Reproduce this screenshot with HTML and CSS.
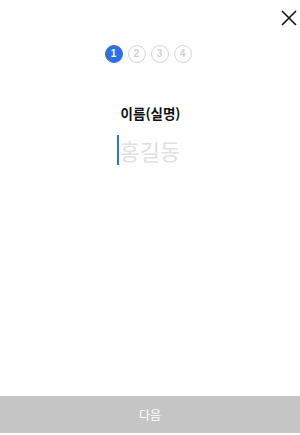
FILE: index.html
```html
<!DOCTYPE html>
<html lang="ko">
<head>
  <meta charset="UTF-8">
  <title>이름 입력</title>
  <meta name="viewport" content="width=device-width, initial-scale=1.0">
  <link rel="stylesheet" href="styles.css">
</head>
<body>
  <div class="page">
    <header class="top">
      <button class="close" type="button" aria-label="닫기">
        <svg width="16" height="16" viewBox="0 0 16 16">
          <path d="M1 1 L15 15 M15 1 L1 15" stroke="#111" stroke-width="1.6" fill="none"/>
        </svg>
      </button>
    </header>

    <!-- 단계 표시 -->
    <ol class="steps">
      <li class="step active">1</li>
      <li class="step">2</li>
      <li class="step">3</li>
      <li class="step">4</li>
    </ol>

    <form class="form" action="#">
      <label class="label" for="name">이름(실명)</label>
      <div class="field">
        <span class="caret"></span>
        <input id="name" class="input" type="text" placeholder="홍길동">
      </div>
    </form>

    <button class="next" type="button">다음</button>
  </div>
</body>
</html>
```

FILE: styles.css
```css
/* 기본 */
html, body {
  margin: 0;
  padding: 0;
  background: #fff;
  font-family: "Noto Sans CJK KR", "Noto Sans", sans-serif;
}

.page {
  width: 300px;
  height: 435px;
  display: flex;
  flex-direction: column;
}

.top {
  height: 36px;
  display: flex;
  justify-content: flex-end;
}

.close {
  border: 0;
  background: none;
  padding: 0;
  margin: 10px 3px 0 0;
  width: 16px;
  height: 16px;
  cursor: pointer;
}

.close svg {
  display: block;
}

/* 단계 */
.steps {
  list-style: none;
  margin: 9px 0 0 0;
  padding: 0 4px 0 0;
  display: flex;
  justify-content: center;
  gap: 5px;
}

.step {
  width: 16px;
  height: 16px;
  border: 1px solid #d4d4d4;
  border-radius: 50%;
  color: #cfcfcf;
  font-family: "Liberation Sans", Arial, sans-serif;
  font-weight: bold;
  font-size: 10px;
  line-height: 16px;
  text-align: center;
}

.step.active {
  background: #2f6fe6;
  border-color: #2f6fe6;
  color: #fff;
}

/* 입력 */
.form {
  margin-top: 41px;
  display: flex;
  flex-direction: column;
  align-items: center;
}

.label {
  font-size: 13.5px;
  font-weight: bold;
  color: #111;
  line-height: 18px;
  padding-left: 1px;
}

.field {
  margin-top: 13px;
  display: flex;
  align-items: center;
  padding-left: 6px;
}

.caret {
  width: 2px;
  height: 30px;
  background: #2f6fe6;
}

.input {
  border: 0;
  outline: none;
  padding: 0 0 0 1px;
  width: 70px;
  font-family: "Noto Sans CJK KR", sans-serif;
  font-size: 22px;
  line-height: 30px;
  height: 30px;
  color: #111;
}

.input::placeholder {
  color: #e0e0e0;
}

/* 다음 버튼 */
.next {
  margin-top: auto;
  margin-bottom: 2px;
  height: 37px;
  border: 0;
  background: #c5c5c5;
  color: #fff;
  font-family: "Noto Sans CJK KR", sans-serif;
  font-size: 12px;
  width: 100%;
}
```
